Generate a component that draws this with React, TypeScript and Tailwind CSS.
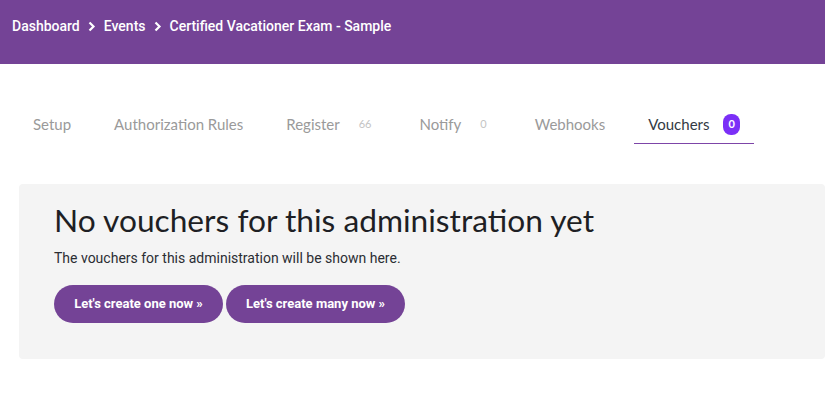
import React from "react";

function Chevron() {
  return (
    <svg width="8" height="11" viewBox="0 0 8 11" className="mx-[8px]">
      <path d="M1.5 1.5 L5.5 5.5 L1.5 9.5" fill="none" stroke="white" strokeWidth="2.2" />
    </svg>
  );
}

const tabs = [
  { label: "Setup" },
  { label: "Authorization Rules" },
  { label: "Register", count: "66" },
  { label: "Notify", count: "0" },
  { label: "Webhooks" },
  { label: "Vouchers", count: "0", active: true },
];

export default function App() {
  return (
    <div className="w-[825px] h-[417px] bg-white overflow-hidden" style={{ fontFamily: "Roboto, sans-serif" }}>
      <div className="h-[64px] bg-[#744396] flex items-start pt-[17px] pl-[12px]">
        <div className="flex items-center text-white text-[14px] font-medium leading-[18px]">
          <span>Dashboard</span>
          <Chevron />
          <span>Events</span>
          <Chevron />
          <span>Certified Vacationer Exam - Sample</span>
        </div>
      </div>

      <div className="flex pl-[19px] mt-[46px] gap-[15px]" style={{ fontFamily: "Lato, sans-serif" }}>
        {tabs.map((t) => (
          <div key={t.label} className="flex flex-col h-[34px] text-[15px]">
            <div
              className={`flex-1 flex items-center pb-[4px] px-[14px] ${
                t.active ? "text-[#333a44]" : "text-[#9a9a9a]"
              }`}
            >
              <span>{t.label}</span>
              {t.count !== undefined && (
                <span
                  className={`ml-[14px] h-[21px] flex items-center rounded-[8px] px-[5px] text-[11px] font-bold ${
                    t.active ? "bg-[#7b2ff7] text-white" : "text-[#c4c4c4] font-normal"
                  }`}
                >
                  {t.count}
                </span>
              )}
            </div>
            <div className={`h-[1.5px] ${t.active ? "bg-[#7d45a8]" : "bg-transparent"}`} />
          </div>
        ))}
      </div>

      <div className="ml-[19px] mt-[40px] bg-[#f4f4f4] rounded-[4px] h-[175px] pl-[35px] pt-[16px]">
        <h1 className="text-[31.7px] leading-[40px] text-[#1e1f24]" style={{ fontFamily: "Lato, sans-serif" }}>
          No vouchers for this administration yet
        </h1>
        <p className="text-[14px] text-[#2b2d33] mt-[9px] leading-[18px]">
          The vouchers for this administration will be shown here.
        </p>
        <div className="flex gap-[3px] mt-[18px]">
          <button className="h-[38px] w-[169px] rounded-full bg-[#744396] text-white text-[13px] font-bold">
            Let's create one now »
          </button>
          <button className="h-[38px] w-[179px] rounded-full bg-[#744396] text-white text-[13px] font-bold">
            Let's create many now »
          </button>
        </div>
      </div>
    </div>
  );
}
